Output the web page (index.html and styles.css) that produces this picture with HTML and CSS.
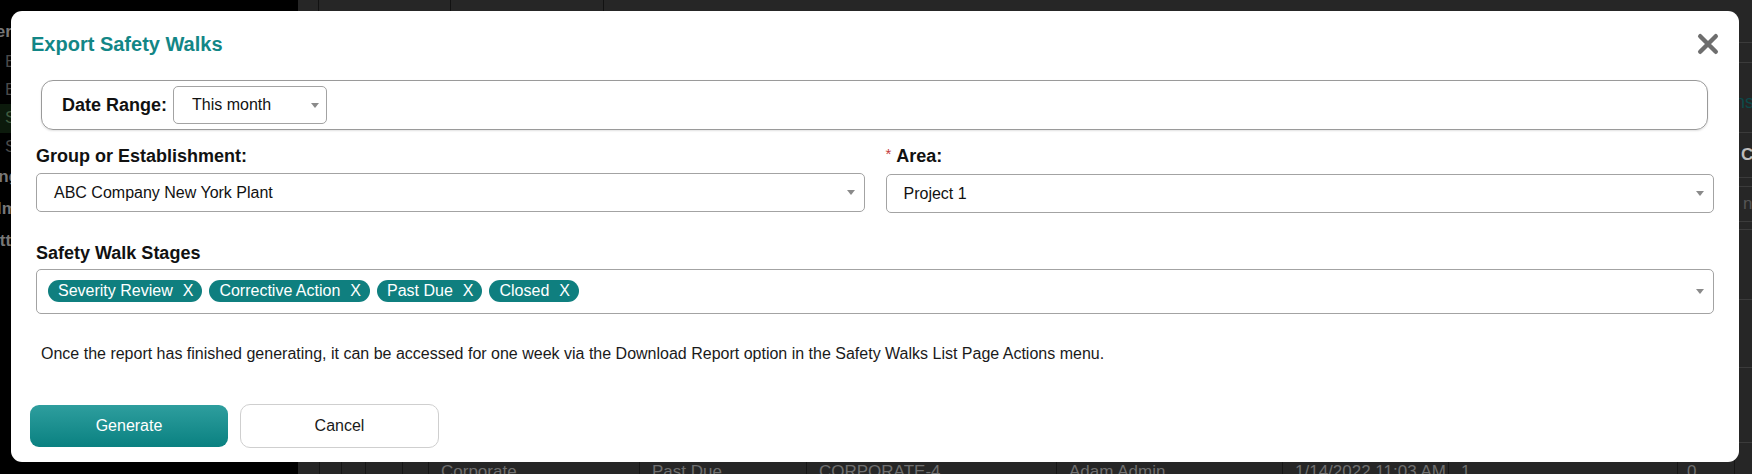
FILE: index.html
```html
<!DOCTYPE html>
<html lang="en">
<head>
<meta charset="utf-8">
<title>Safety Walks</title>
<link rel="stylesheet" href="styles.css">
</head>
<body>
<div class="app">
  <aside class="sidebar">
    <ul class="nav">
      <li class="nav-item nav-group nav-overview">Overview</li>
      <li class="nav-item">Events</li>
      <li class="nav-item">Equipment</li>
      <li class="nav-item active">Safety Walks</li>
      <li class="nav-item">Schedules</li>
      <li class="nav-item nav-group">Training</li>
      <li class="nav-item nav-group nav-short">Admin</li>
      <li class="nav-item nav-group nav-short">Settings</li>
    </ul>
  </aside>

  <main class="page">
    <div class="topbar">
      <div class="topbar-cell tb-1"></div>
      <div class="topbar-cell tb-2"></div>
      <div class="topbar-cell tb-3"></div>
      <div class="topbar-cell tb-4"></div>
    </div>
    <div class="strip strip-thin"></div>
    <div class="strip strip-actions"><span class="actions-link">Actions</span></div>

    <div class="grid-table">
      <div class="tr th-row">
        <div class="td"></div><div class="td"></div><div class="td"></div><div class="td"></div><div class="td"></div>
        <div class="td">Group</div><div class="td">Stage</div><div class="td">Safety Walk #</div>
        <div class="td">Created By</div><div class="td">Date</div><div class="td">Findings</div>
        <div class="td">Open</div><div class="td">Comments</div>
      </div>
      <div class="tr spacer-row spacer-9"></div>
      <div class="tr filter-row"><div class="filter-text">n</div></div>
      <div class="tr spacer-row spacer-8"></div>
      <div class="tr body-row row-70"></div>
      <div class="tr body-row row-68"></div>
      <div class="tr body-row row-75"></div>
      <div class="tr data-row">
        <div class="td"></div><div class="td"></div><div class="td"></div><div class="td"></div><div class="td"></div>
        <div class="td">Corporate</div><div class="td">Past Due</div><div class="td">CORPORATE-4</div>
        <div class="td">Adam Admin</div><div class="td">1/14/2022 11:03 AM</div><div class="td">1</div>
        <div class="td">0</div><div class="td"></div>
      </div>
    </div>
  </main>
</div>

<div class="modal" role="dialog" aria-labelledby="export-title">
  <header class="modal-header">
    <h2 class="modal-title" id="export-title">Export Safety Walks</h2>
    <button class="modal-close" type="button" aria-label="Close">
      <svg width="22" height="22" viewBox="0 0 22 22" aria-hidden="true">
        <path d="M3.2 3.2 L18.8 18.8 M18.8 3.2 L3.2 18.8" stroke="#6e6e6e" stroke-width="4.4" stroke-linecap="round" fill="none"/>
      </svg>
    </button>
  </header>

  <div class="modal-body">
    <div class="date-range">
      <span class="field-label">Date Range:</span>
      <div class="select select-date"><span class="select-value">This month</span><i class="caret"></i></div>
    </div>

    <div class="field-row">
      <div class="field">
        <span class="field-label">Group or Establishment:</span>
        <div class="select"><span class="select-value">ABC Company New York Plant</span><i class="caret"></i></div>
      </div>
      <div class="field">
        <span class="field-label"><span class="req">*</span>Area:</span>
        <div class="select"><span class="select-value">Project 1</span><i class="caret"></i></div>
      </div>
    </div>

    <div class="field field-stages">
      <span class="field-label">Safety Walk Stages</span>
      <div class="select select-multi">
        <div class="chips">
          <span class="chip">Severity Review<b class="chip-x">X</b></span>
          <span class="chip">Corrective Action<b class="chip-x">X</b></span>
          <span class="chip">Past Due<b class="chip-x">X</b></span>
          <span class="chip">Closed<b class="chip-x">X</b></span>
        </div>
        <i class="caret"></i>
      </div>
    </div>

    <p class="note">Once the report has finished generating, it can be accessed for one week via the Download Report option in the Safety Walks List Page Actions menu.</p>
  </div>

  <footer class="modal-footer">
    <button class="btn btn-primary" type="button">Generate</button>
    <button class="btn btn-secondary" type="button">Cancel</button>
  </footer>
</div>
</body>
</html>
```

FILE: styles.css
```css
* { box-sizing: border-box; }

html, body {
  margin: 0;
  height: 100%;
}

body {
  font-family: "Liberation Sans", Arial, sans-serif;
  font-size: 16px;
  color: #111;
  background: #000;
  overflow: hidden;
}

/* ---------- page behind the dialog ---------- */
.app {
  display: flex;
  height: 474px;
  overflow: hidden;
}

.sidebar {
  width: 298px;
  flex: none;
  background: #000;
  overflow: hidden;
}

.nav {
  list-style: none;
  margin: 0;
  padding: 16px 0 0;
}

.nav-item {
  height: 28px;
  line-height: 28px;
  padding-left: 5px;
  color: #4a4a4a;
  font-size: 17px;
  white-space: nowrap;
}

.nav-item.active {
  background: #0c1a0c;
  color: #3f5a3f;
  height: 29px;
}

.nav-group {
  font-weight: bold;
  color: #777;
  text-indent: -52px;
  height: 32px;
  line-height: 32px;
}

.nav-overview { text-indent: -32px; }
.nav-short { text-indent: -26px; }

.page {
  flex: 1;
  min-width: 0;
  background: #262626;
  display: flex;
  flex-direction: column;
  overflow: hidden;
}

.topbar {
  display: flex;
  height: 43px;
  flex: none;
  border-bottom: 1px solid #3b3b3b;
}

.topbar-cell { border-right: 1px solid #121212; }
.tb-1 { width: 21px; }
.tb-2 { width: 132px; }
.tb-3 { width: 153px; }
.tb-4 { flex: 1; border-right: 0; }

.strip {
  flex: none;
  border-bottom: 1px solid #3b3b3b;
}

.strip-thin { height: 20px; }

.strip-actions {
  height: 70px;
  display: flex;
  align-items: center;
  justify-content: flex-end;
  padding-top: 10px;
}

.actions-link {
  color: #0b4a4a;
  font-size: 18px;
  margin-right: -2px;
}

.grid-table {
  display: flex;
  flex-direction: column;
}

.tr {
  display: grid;
  grid-template-columns: 22px 22px 24px 37px 26px 211px 167px 250px 226px 166px 229px 57px 140px;
  border-bottom: 1px solid #3b3b3b;
  flex: none;
}

.th-row {
  height: 45px;
  align-items: center;
  font-weight: bold;
  color: #bdbdbd;
  font-size: 17px;
}

.th-row .td { padding-left: 6px; white-space: nowrap; overflow: hidden; }

.spacer-9 { height: 9px; }
.spacer-8 { height: 8px; }

.filter-row {
  height: 35px;
  display: flex;
  justify-content: flex-end;
  align-items: center;
}

.filter-text {
  color: #555;
  font-size: 17px;
  width: 9px;
  overflow: hidden;
}

.row-70 { height: 70px; }
.row-68 { height: 68px; }
.row-75 { height: 75px; }

.data-row {
  height: 60px;
  color: #6f6f6f;
  font-size: 17px;
  border-bottom: 0;
}

.data-row .td {
  border-right: 1px solid #161616;
  padding: 19px 0 0 12px;
  white-space: nowrap;
  overflow: hidden;
}

.data-row .td:nth-child(12) { padding-left: 9px; }

/* ---------- export dialog ---------- */
.modal {
  position: absolute;
  left: 11px;
  top: 11px;
  width: 1728px;
  height: 451px;
  background: #fff;
  border-radius: 11px;
  display: flex;
  flex-direction: column;
}

.modal-header {
  display: flex;
  align-items: center;
  justify-content: space-between;
  padding: 21px 20px 0 20px;
}

.modal-title {
  margin: 0;
  font-size: 20px;
  line-height: 24px;
  font-weight: bold;
  color: #128686;
}

.modal-close {
  border: 0;
  background: none;
  padding: 0;
  width: 22px;
  height: 22px;
  display: flex;
  cursor: pointer;
}

.modal-body {
  padding: 24px 25px 0 25px;
}

.field-label {
  display: block;
  font-size: 18px;
  line-height: 22px;
  font-weight: bold;
  color: #111;
}

.date-range {
  display: flex;
  align-items: center;
  margin: 0 6px 0 5px;
  height: 50px;
  padding: 0 20px;
  border: 1px solid #9a9a9a;
  border-radius: 12px;
  box-shadow: 0 1px 2px rgba(0, 0, 0, 0.12);
}

.date-range .field-label { margin-right: 6px; }

.select {
  display: flex;
  align-items: center;
  height: 39px;
  padding: 0 9px 0 17px;
  border: 1px solid #a3a3a3;
  border-radius: 5px;
  background: #fff;
}

.select-value {
  font-size: 16px;
  color: #111;
  white-space: nowrap;
}

.select-date {
  width: 154px;
  height: 38px;
  padding-left: 18px;
  padding-right: 7px;
}

.caret {
  margin-left: auto;
  width: 0;
  height: 0;
  border-left: 4px solid transparent;
  border-right: 4px solid transparent;
  border-top: 5px solid #8a8a8a;
}

.field-row {
  display: grid;
  grid-template-columns: 1fr 1fr;
  column-gap: 21px;
  margin-top: 15px;
}

.field .field-label { margin-bottom: 6px; }

.req {
  color: #c43b3b;
  font-weight: normal;
  font-size: 15px;
  margin-right: 5px;
  position: relative;
  top: -3px;
}

.field-stages { margin-top: 29px; }
.field-stages .field-label { margin-bottom: 5px; }

.select-multi {
  height: 45px;
  padding-left: 11px;
}

.chips {
  display: flex;
  gap: 7px;
  margin-top: -2px;
}

.chip {
  display: inline-flex;
  align-items: center;
  height: 22px;
  padding: 0 9px 0 10px;
  border-radius: 11px;
  background: #0f7f7f;
  color: #fff;
  font-size: 16px;
  line-height: 22px;
  white-space: nowrap;
}

.chip-x {
  font-weight: normal;
  margin-left: 10px;
}

.note {
  margin: 30px 0 0 5px;
  font-size: 16px;
  line-height: 20px;
  color: #1a1a1a;
}

.modal-footer {
  display: flex;
  align-items: center;
  gap: 12px;
  padding: 40px 0 0 19px;
}

.btn {
  font-family: inherit;
  font-size: 16px;
  height: 43px;
  border-radius: 9px;
  cursor: pointer;
}

.btn-primary {
  width: 198px;
  height: 42px;
  border: 0;
  color: #fff;
  background: linear-gradient(#2e9e9e, #0a8181);
}

.btn-secondary {
  width: 199px;
  height: 44px;
  border: 1px solid #cfcfcf;
  border-radius: 10px;
  background: #fff;
  color: #1a1a1a;
}
```
